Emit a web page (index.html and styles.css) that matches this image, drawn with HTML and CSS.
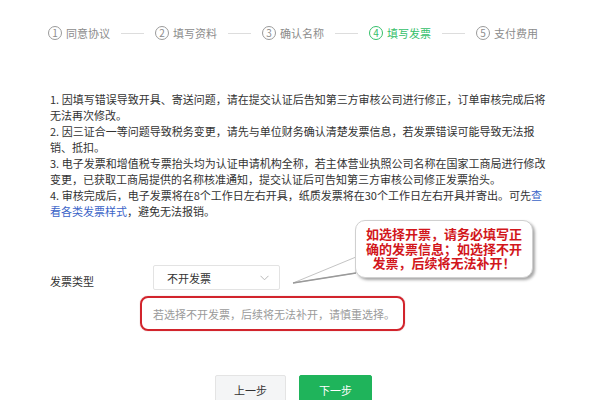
FILE: index.html
```html
<!DOCTYPE html>
<html lang="zh">
<head>
<meta charset="utf-8">
<link rel="stylesheet" href="styles.css">
</head>
<body>
<div class="page">
  <div class="steps">
    <div class="step"><span class="num">1</span><span>同意协议</span></div>
    <span class="line"></span>
    <div class="step"><span class="num">2</span><span>填写资料</span></div>
    <span class="line"></span>
    <div class="step"><span class="num">3</span><span>确认名称</span></div>
    <span class="line"></span>
    <div class="step active"><span class="num">4</span><span>填写发票</span></div>
    <span class="line"></span>
    <div class="step"><span class="num">5</span><span>支付费用</span></div>
  </div>

  <div class="notes">
    <p>1. 因填写错误导致开具、寄送问题，请在提交认证后告知第三方审核公司进行修正，订单审核完成后将无法再次修改。</p>
    <p>2. 因三证合一等问题导致税务变更，请先与单位财务确认清楚发票信息，若发票错误可能导致无法报销、抵扣。</p>
    <p>3. 电子发票和增值税专票抬头均为认证申请机构全称，若主体营业执照公司名称在国家工商局进行修改变更，已获取工商局提供的名称核准通知，提交认证后可告知第三方审核公司修正发票抬头。</p>
    <p>4. 审核完成后，电子发票将在8个工作日左右开具，纸质发票将在30个工作日左右开具并寄出。可先<a class="link">查看各类发票样式</a>，避免无法报销。</p>
  </div>

  <div class="form-row">
    <span class="label">发票类型</span>
    <div class="select">
      <span>不开发票</span>
      <svg class="chev" width="9" height="6" viewBox="0 0 9 6"><polyline points="0.5,0.8 4.5,4.8 8.5,0.8" fill="none" stroke="#b8b8b8" stroke-width="1"/></svg>
    </div>
  </div>

  <div class="hint">若选择不开发票，后续将无法补开，请慎重选择。</div>

  <div class="buttons">
    <button class="btn prev">上一步</button>
    <button class="btn next">下一步</button>
  </div>

  <svg class="tail" width="80" height="50" viewBox="0 0 80 50">
    <polygon points="70,22 70,38 7,48" fill="#ffffff" stroke="#c4c4c4" stroke-width="1"/>
    <line x1="70" y1="38" x2="7" y2="48" stroke="#9a9a9a" stroke-width="1.6"/>
  </svg>
  <div class="callout">如选择开票，请务必填写正<br>确的发票信息；如选择不开<br>发票，后续将无法补开！</div>
</div>
</body>
</html>
```

FILE: styles.css
```css
html, body {
  margin: 0;
  padding: 0;
  background: #ffffff;
}

body {
  font-family: "Noto Sans CJK SC", "Noto Sans", sans-serif;
  color: #333333;
}

.page {
  position: relative;
  width: 600px;
  height: 400px;
  overflow: hidden;
  padding-top: 26px;
  box-sizing: border-box;
}

.steps {
  display: flex;
  align-items: center;
  margin-left: 48px;
  height: 14px;
}

.step {
  display: flex;
  align-items: center;
  gap: 4px;
  color: #8c8c8c;
  font-size: 11px;
  line-height: 14px;
  white-space: nowrap;
}

.num {
  width: 14px;
  height: 14px;
  box-sizing: border-box;
  border: 1px solid #9a9a9a;
  border-radius: 50%;
  display: flex;
  align-items: center;
  justify-content: center;
  font-size: 10px;
  line-height: 1;
}

.step.active {
  color: #35c06a;
}

.step.active .num {
  border-color: #35c06a;
}

.line {
  width: 23px;
  height: 1px;
  background: #dddddd;
  margin: 0 11px;
}

.notes {
  margin: 51px 0 0 50px;
  width: 498px;
  font-size: 11px;
  line-height: 16px;
  color: #333333;
}

.notes p {
  margin: 0;
}

.link {
  color: #3b64c8;
}

.form-row {
  display: flex;
  align-items: center;
  margin: 46px 0 0 50px;
}

.label {
  width: 103px;
  margin-top: 7px;
  font-size: 11px;
  color: #333333;
}

.select {
  width: 127px;
  height: 25px;
  box-sizing: border-box;
  border: 1px solid #e3e3e3;
  border-radius: 2px;
  display: flex;
  align-items: center;
  justify-content: space-between;
  padding: 0 10px 0 13px;
  font-size: 11px;
  color: #333333;
}

.chev {
  display: block;
}

.hint {
  margin: 6px 0 0 140px;
  width: 265px;
  height: 35px;
  box-sizing: border-box;
  border: 2.5px solid #d2242c;
  border-radius: 8px;
  padding-left: 11px;
  display: flex;
  align-items: center;
  font-size: 11px;
  color: #9a9a9a;
  box-shadow: 0 0 1px rgba(150, 20, 20, 0.5);
}

.buttons {
  display: flex;
  gap: 13px;
  margin: 44px 0 0 215px;
}

.btn {
  height: 30px;
  border-radius: 2px;
  font-family: "Noto Sans CJK SC", sans-serif;
  font-size: 11px;
  padding: 0;
  cursor: pointer;
}

.prev {
  width: 71px;
  background: #f4f5f6;
  border: 1px solid #e4e4e4;
  color: #333333;
}

.next {
  width: 73px;
  background: #1fb45b;
  border: 1px solid #1fb45b;
  color: #ffffff;
}

.tail {
  position: absolute;
  left: 286px;
  top: 235px;
}

.callout {
  position: absolute;
  left: 355px;
  top: 220px;
  width: 178px;
  height: 58px;
  box-sizing: border-box;
  background: #ffffff;
  border: 1px solid #d0d0d0;
  border-radius: 10px;
  box-shadow: 2px 2px 3px rgba(0, 0, 0, 0.35);
  padding-top: 6px;
  text-align: center;
  color: #d2161b;
  font-weight: bold;
  font-size: 13px;
  line-height: 14.5px;
  font-family: "Noto Sans CJK SC", sans-serif;
}
```
